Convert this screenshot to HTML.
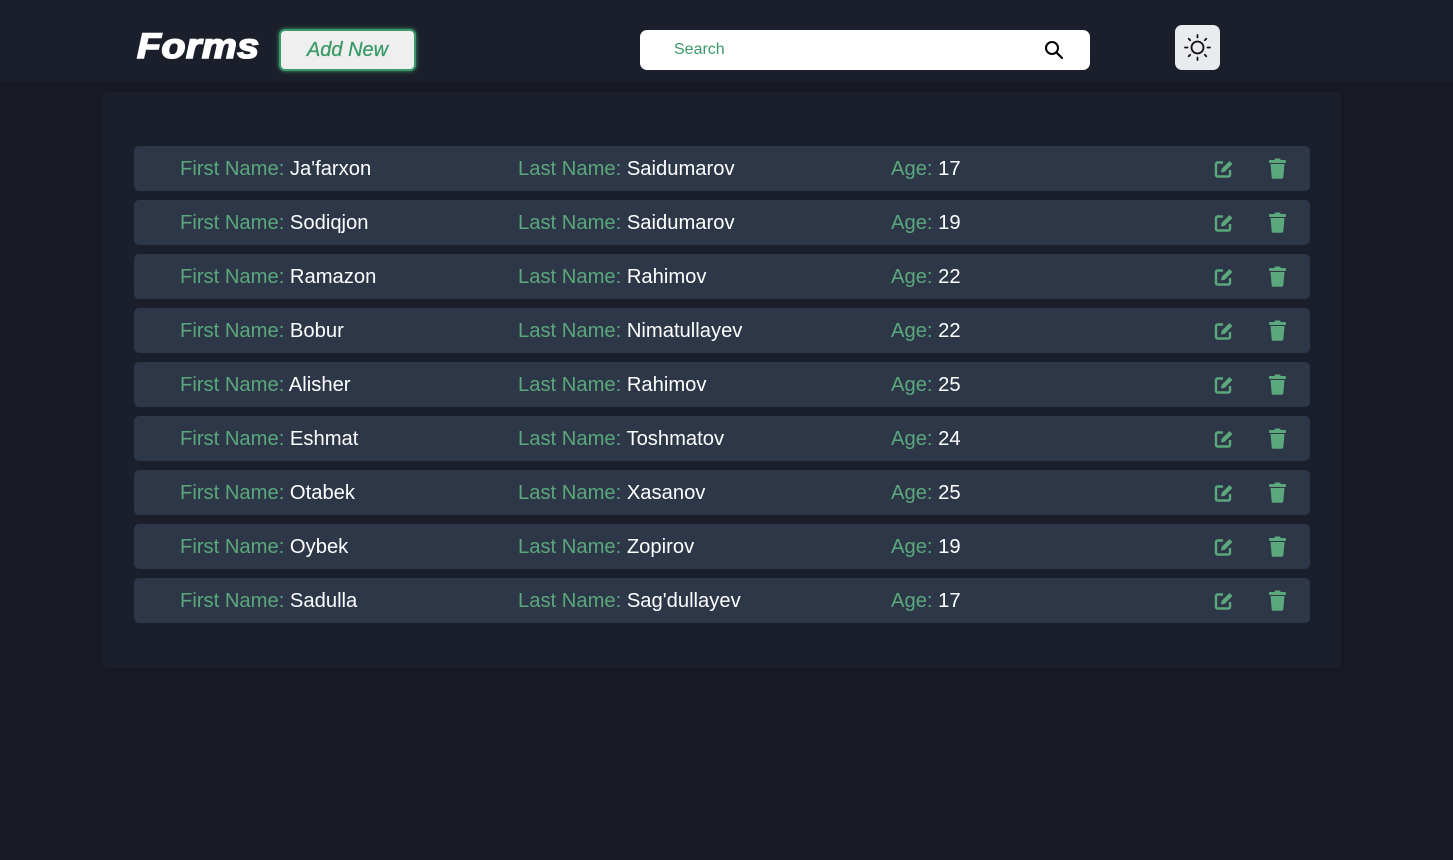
<!DOCTYPE html>
<html><head><meta charset="utf-8"><style>
*{margin:0;padding:0;box-sizing:border-box}
body{width:1453px;height:860px;background:#171a22;font-family:"Liberation Sans",Arial,sans-serif;position:relative;overflow:hidden}
.hdr{position:absolute;left:0;top:0;width:1453px;height:81px;background:#1b1f2b}
.logo{position:absolute;left:137px;top:27px;font-size:35px;font-weight:bold;font-style:italic;color:#fff;-webkit-text-stroke:1.6px #fff;letter-spacing:0.5px;transform:scaleX(1.12);transform-origin:left top}
.add{position:absolute;left:279px;top:29px;width:137px;height:42px;background:#efefef;border:2px solid #3a9a68;border-radius:6px;box-shadow:0 0 4px #3a9a68;color:#3a9a68;font-style:italic;font-size:20px;text-align:center;line-height:39px;-webkit-text-stroke:0.3px #3a9a68}
.search{position:absolute;left:640px;top:30px;width:450px;height:40px;background:#fff;border-radius:7px}
.search span{position:absolute;left:34px;top:11px;font-size:16px;color:#3a9a68}
.theme{position:absolute;left:1175px;top:25px;width:45px;height:45px;background:#e9ebee;border-radius:7px}
.box{position:absolute;left:103px;top:92px;width:1238px;height:576px;background:#1b1f2b;border-radius:4px}
.row{position:absolute;left:134px;width:1176px;height:45px;background:#2d3748;border-radius:5px;font-size:20.2px;color:#fff}
.row div{position:absolute;top:12px;white-space:nowrap}
.row b{font-weight:normal;color:#5aa87c}
.row svg{position:absolute;top:12px}
</style></head><body>
<div class="hdr">
<div class="logo">Forms</div>
<div class="add">Add New</div>
<div class="search"><span>Search</span>
<svg style="position:absolute;left:404px;top:10px" width="20" height="20" viewBox="0 0 20 20"><circle cx="8" cy="8" r="6" fill="none" stroke="#000" stroke-width="2"/><line x1="12.5" y1="12.5" x2="18" y2="18" stroke="#000" stroke-width="2.2" stroke-linecap="round"/></svg></div>
<div class="theme"><svg width="45" height="45" viewBox="0 0 45 45"><circle cx="22.5" cy="22.5" r="6" fill="none" stroke="#111" stroke-width="1.8"/><g stroke="#111" stroke-width="1.8" stroke-linecap="round"><line x1="22.5" y1="10" x2="22.5" y2="12.5"/><line x1="22.5" y1="32.5" x2="22.5" y2="35"/><line x1="10" y1="22.5" x2="12.5" y2="22.5"/><line x1="32.5" y1="22.5" x2="35" y2="22.5"/><line x1="13.7" y1="13.7" x2="15.2" y2="15.2"/><line x1="29.8" y1="29.8" x2="31.3" y2="31.3"/><line x1="13.7" y1="31.3" x2="15.2" y2="29.8"/><line x1="29.8" y1="15.2" x2="31.3" y2="13.7"/></g></svg></div>
</div>
<div class="box"></div>
<div id="rows"></div>
<script>
var d=[["Ja'farxon","Saidumarov",17],["Sodiqjon","Saidumarov",19],["Ramazon","Rahimov",22],["Bobur","Nimatullayev",22],["Alisher","Rahimov",25],["Eshmat","Toshmatov",24],["Otabek","Xasanov",25],["Oybek","Zopirov",19],["Sadulla","Sag'dullayev",17]];
var h="";
d.forEach(function(r,i){
h+='<div class="row" style="top:'+(146+i*54)+'px"><div style="left:46px"><b>First Name:</b> '+r[0]+'</div><div style="left:384px"><b>Last Name:</b> '+r[1]+'</div><div style="left:757px"><b>Age:</b> '+r[2]+'</div>'+
'<svg style="left:1079px" width="22" height="22" viewBox="0 0 22 22"><path d="M10 4.5H4.5a1.5 1.5 0 0 0-1.5 1.5v11a1.5 1.5 0 0 0 1.5 1.5h11a1.5 1.5 0 0 0 1.5-1.5V12" fill="none" stroke="#5aa87c" stroke-width="2.4"/><path d="M8 14.5l.6-3.6L16.5 3l3 3-7.9 7.9z" fill="#5aa87c"/></svg>'+
'<svg style="left:1134px" width="19" height="21" viewBox="0 0 19 21"><rect x="1" y="2" width="17" height="3" rx="1" fill="#5aa87c"/><rect x="6.5" y="0.5" width="6" height="2.5" rx="1" fill="#5aa87c"/><path d="M2.5 6h14l-1.2 13.5a1.5 1.5 0 0 1-1.5 1.2H5.2a1.5 1.5 0 0 1-1.5-1.2z" fill="#5aa87c"/></svg></div>';
});
document.getElementById("rows").innerHTML=h;
</script>
</body></html>
